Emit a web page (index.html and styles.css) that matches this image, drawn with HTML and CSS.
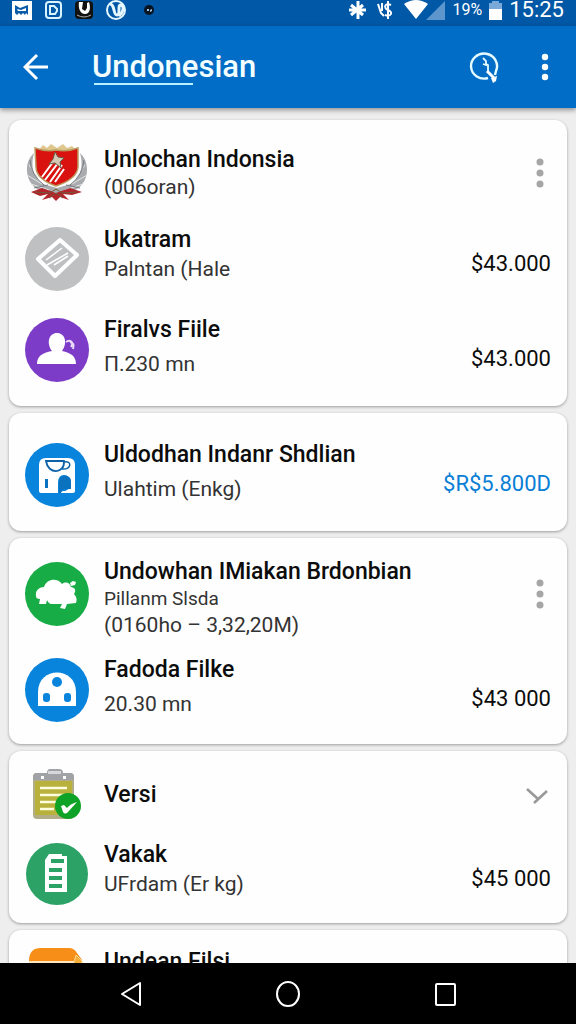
FILE: index.html
```
<!DOCTYPE html>
<html lang="id">
<head>
    <meta charset="UTF-8">
    <meta name="viewport" content="width=device-width, initial-scale=1.0">
    <title>Undonesian</title>
    <link rel="stylesheet" href="styles.css">
</head>
<body>

    <div class="status-bar">
        <div class="status-left">
            <svg width="20" height="19" viewBox="0 0 20 19"><path fill="#fff" d="M0 0h20v19H0z"/><path fill="#0a5ca8" d="M3 4l5 3 8-3v10l-2-2-1 2-2-2-2 2-2-2-2 2-2-2z"/><path fill="#fff" d="M5 8l4 1 5-2v3H6z"/></svg>
            <svg width="17" height="18" viewBox="0 0 17 18"><rect x="1" y="1" width="15" height="16" rx="3" fill="none" stroke="#d9f3ff" stroke-width="2"/><path fill="none" stroke="#d9f3ff" stroke-width="2" d="M5 5h4l3 3v2l-2 3H5z"/></svg>
            <svg width="18" height="18" viewBox="0 0 18 18"><rect width="18" height="18" rx="4" fill="#111"/><path fill="#fff" d="M4 1c-1 6 1 12 6 12s6-6 4-12l-2 1v5l-2 3-3-2 1-7z"/><path fill="none" stroke="#aaa" d="M2 14q7 4 14 0"/></svg>
            <svg width="21" height="20" viewBox="0 0 21 20"><circle cx="10" cy="10" r="9" fill="none" stroke="#e6f8ff" stroke-width="2"/><path fill="none" stroke="#e6f8ff" stroke-width="3" d="M4 4c5 0 3 11 7 11s0-11 4-10 2 8-2 11"/></svg>
            <svg class="small-dot" width="10" height="10" viewBox="0 0 10 10"><circle cx="5" cy="5" r="5" fill="#08131f"/><path fill="#9fc4e6" d="M3 4h2v2H3zM6 5l2-1v2l-2 1z"/></svg>
        </div>
        <div class="status-right">
            <svg width="17" height="20" viewBox="0 0 17 20"><path fill="none" stroke="#fff" stroke-width="3" d="M2 5l12 10M2 15L14 5M0 10h17M9 1v18"/></svg>
            <svg class="currency" width="16" height="18" viewBox="0 0 16 18"><path fill="none" stroke="#fff" stroke-width="2" d="M1 3l3 9 3 3M5 2v8M14 4c-6-3-8 3-3 5s4 7-3 5M11 0v18"/></svg>
            <svg width="42" height="20" viewBox="0 0 42 20"><path fill="#fff" d="M0 4q12-8 24 0L12 19z"/><path fill="#5d95cd" d="M41 1v19H22z"/></svg>
            <span class="percent">19%</span>
            <svg width="13" height="19" viewBox="0 0 13 19"><path fill="#78a9d8" d="M3 0h7v2h3v6H0V2h3z"/><path fill="#fff" d="M0 8h13v11H0z"/></svg>
            <span class="clock">15:25</span>
        </div>
    </div>

    <header>
        <button class="icon-button" aria-label="Back">
            <svg width="26" height="28" viewBox="0 0 26 28"><path fill="none" stroke="#fff" stroke-width="3" d="M14 2L2 14l12 12M2 14h23"/></svg>
        </button>
        <h1>Undonesian</h1>
        <button class="icon-button search" aria-label="Search">
            <svg width="30" height="32" viewBox="0 0 30 32"><path fill="none" stroke="#e6fbff" stroke-width="2.4" d="M19 27A13 12.5 0 1 1 27 20l-1 4"/><path fill="none" stroke="#e6fbff" stroke-width="1.8" d="M14 7l3 3v4l-3-1M17 13l2 1v7"/><path fill="none" stroke="#fff" stroke-width="3" d="M18 20l7 7"/><path fill="#fff" d="M22 27l6-2-1 5-3 2z"/></svg>
        </button>
        <button class="icon-button" aria-label="More options">
            <svg width="8" height="28" viewBox="0 0 8 28" fill="#fff"><circle cx="4" cy="4" r="3.2"/><circle cx="4" cy="14" r="3.2"/><circle cx="4" cy="24" r="3.2"/></svg>
        </button>
    </header>

    <main>
        <section class="card">
            <div class="row">
                <svg class="icon" viewBox="0 0 64 64">
                    <path fill="#a9abae" d="M9 12C-2 22 0 42 14 49l18 3 18-3c14-7 16-27 5-37 4 14 0 25-9 31l-14 4-14-4C9 37 5 26 9 12z"/>
                    <path fill="none" stroke="#e6e6e6" stroke-width="1" d="M4 24l9 13M2 34l15 9M6 43l18 6M60 24l-9 13M62 34l-15 9M58 43l-18 6"/>
                    <path fill="none" stroke="#777b80" stroke-width="1" d="M5 19q1 15 14 25M59 19q-1 15-14 25M9 47l14-3M55 47l-14-3"/>
                    <path fill="#dfc68d" d="M14 9l4-5 4 3 4-4 6 4 6-4 4 4 5-2 5 5z"/>
                    <path fill="#d9120f" stroke="#b99a60" stroke-width="1.5" d="M10 7q11 4 21 2 12 2 22-2v19q-1 12-22 19Q11 38 11 26z"/>
                    <path stroke="#fff" stroke-width="2" d="M17 36l11-15M20 39l13-17M25 41l12-17M30 41l9-13"/>
                    <path fill="#d3c8b4" stroke="#6b5a45" stroke-width="1" d="M30 11l3 5 6 1-4 4 1 6-6-5-6 1 4-5z"/>
                    <path fill="#fff" d="M14 38l5 2 2 4z"/>
                    <path fill="#b2242a" d="M6 51l11-4 14 5 14-5 12 4-10 3-9-1 6 6-9-3-4 4-4-4-10 3 6-6-8 2z"/>
                    <path fill="none" stroke="#6d5a3a" stroke-width="1" d="M10 51l15 1 6-4 6 4 15-1M24 57l7-5 7 5"/>
                </svg>
                <div class="text">
                    <h2>Unlochan Indonsia</h2>
                    <p>(006oran)</p>
                </div>
                <button class="more" aria-label="More">
                    <svg width="22" height="30" viewBox="0 0 22 30" fill="#a6a6a6"><circle cx="11" cy="4" r="3.5"/><circle cx="11" cy="15" r="3.5"/><circle cx="11" cy="26" r="3.5"/></svg>
                </button>
            </div>
            <div class="row medium">
                <svg class="icon" viewBox="0 0 64 64">
                    <circle cx="32" cy="32" r="32" fill="#bfc0c1"/>
                    <path fill="none" stroke="#fff" stroke-width="4" stroke-linejoin="round" d="M35 13l17 15-22 21-17-17z"/>
                    <path stroke="#fff" stroke-width="1.5" d="M21 33l16-12M22 38l21-12M29 38l14-9"/>
                </svg>
                <div class="text">
                    <h2>Ukatram</h2>
                    <p>Palntan (Hale</p>
                </div>
                <span class="price">$43.000</span>
            </div>
            <div class="row tall">
                <svg class="icon" viewBox="0 0 64 64">
                    <circle cx="32" cy="32" r="32" fill="#7d3cc8"/>
                    <path fill="#fff" d="M12 46c0-8 5-11 15-13-6-8-3-18 5-18s11 10 5 18c9 2 14 5 14 13z"/>
                    <path fill="none" stroke="#eadcf8" stroke-width="2" d="M41 24c4-3 8 0 5 5M45 24c4 1 4 3 3 7"/>
                </svg>
                <div class="text">
                    <h2>Firalvs Fiile</h2>
                    <p>Π.230 mn</p>
                </div>
                <span class="price">$43.000</span>
            </div>
        </section>

        <section class="card single">
            <div class="row tall">
                <svg class="icon" viewBox="0 0 64 64">
                    <circle cx="32" cy="32" r="32" fill="#0984dc"/>
                    <path fill="#fff" d="M14 22q0-7 7-7h22q7 0 7 7v26q0 2-2 2H34q1-2 5-2c3 0 6-2 6-8 0-5-2-8-6-8s-6 3-6 8v10H16q-2 0-2-2z"/>
                    <path fill="#fff" stroke="#0b62a9" stroke-width="1.8" d="M21 18h18c1 13-16 14-18 0z"/>
                    <path fill="none" stroke="#0b62a9" stroke-width="1.5" d="M39 19c8-2 8 8-2 7"/>
                    <path fill="#0b72bf" d="M20 36h3v9h-3zM34 38c0-7 12-7 12 0v8h-7q-2 1-3 4h-2z"/>
                </svg>
                <div class="text">
                    <h2>Uldodhan Indanr Shdlian</h2>
                    <p>Ulahtim (Enkg)</p>
                </div>
                <span class="price blue">$R$5.800D</span>
            </div>
        </section>

        <section class="card tight">
            <div class="row tall">
                <svg class="icon" viewBox="0 0 64 64">
                    <circle cx="32" cy="32" r="32" fill="#17ac45"/>
                    <path fill="#fff" d="M11 34c-1-6 4-9 8-9 3-9 14-9 18-3 4-3 8-1 9 3 5 1 5 4 3 7 3 3 3 6 2 9l-9 1-2 5-5-1 2-4H27c-3 0-4-2-5-4l-1 4h-7l1-5c-3 0-4-1-4-3z"/>
                    <path fill="#fff" d="M45 21l3-2 3 1-1 3-4 1z"/>
                </svg>
                <div class="text three-lines">
                    <h2>Undowhan IMiakan Brdonbian</h2>
                    <p class="small">Pillanm Slsda</p>
                    <p>(0160ho – 3,32,20M)</p>
                </div>
                <button class="more" aria-label="More">
                    <svg width="22" height="30" viewBox="0 0 22 30" fill="#a6a6a6"><circle cx="11" cy="4" r="3.5"/><circle cx="11" cy="15" r="3.5"/><circle cx="11" cy="26" r="3.5"/></svg>
                </button>
            </div>
            <div class="row tall">
                <svg class="icon" viewBox="0 0 64 64">
                    <circle cx="32" cy="32" r="32" fill="#0984dc"/>
                    <path fill="#fff" d="M13 48V34c0-26 38-26 38 0v14z"/>
                    <circle cx="32" cy="24" r="5" fill="#0984dc"/>
                    <rect x="18" y="35" width="7" height="9" rx="3" fill="#0984dc"/>
                    <rect x="39" y="35" width="7" height="9" rx="3" fill="#0984dc"/>
                </svg>
                <div class="text">
                    <h2>Fadoda Filke</h2>
                    <p>20.30 mn</p>
                </div>
                <span class="price">$43 000</span>
            </div>
        </section>

        <section class="card tight">
            <div class="row short">
                <svg class="icon" viewBox="0 0 64 64">
                    <rect x="8" y="10" width="41" height="46" rx="4" fill="#b1ad86"/>
                    <path fill="#b8b13c" d="M10 18h37v34H10z"/>
                    <path fill="#a0a2a5" d="M8 17v-3q0-4 4-4h10q0-4 3-4h9q4 0 4 4h7q4 0 4 4v3z"/>
                    <path fill="#d5d7d8" d="M23 8h13v3H23z"/>
                    <path fill="#fff" d="M16 13h3v3h-3zM38 13h3v3h-3z"/>
                    <path stroke="#fffde0" stroke-width="2.5" d="M15 25h27M15 32h25M15 39h18M15 46h14"/>
                    <circle cx="43" cy="43" r="13" fill="#0ea326"/>
                    <path fill="#fff" d="M36 43l3-1 3 3q3-4 10-6l-9 10q-3 3-5 0z"/>
                </svg>
                <div class="text">
                    <h2>Versi</h2>
                </div>
                <button class="more" aria-label="Expand">
                    <svg width="28" height="20" viewBox="0 0 28 20"><path fill="none" stroke="#999" stroke-width="2.6" d="M4 4l11 10M11 18L24 6"/></svg>
                </button>
            </div>
            <div class="row medium">
                <svg class="icon" viewBox="0 0 64 64">
                    <circle cx="32" cy="32" r="31" fill="#2ca266"/>
                    <path fill="#fff" d="M20 50V18l4-6h13v2h5v36z"/>
                    <path stroke="#2ca266" stroke-width="4" d="M26 19h13M24 28h13M24 36h13M24 44h13"/>
                </svg>
                <div class="text">
                    <h2>Vakak</h2>
                    <p>UFrdam (Er kg)</p>
                </div>
                <span class="price">$45 000</span>
            </div>
        </section>

        <section class="card tight">
            <div class="row top">
                <svg class="icon" viewBox="0 0 64 64">
                    <path fill="#f78e18" d="M4 23q0-13 12-13h28q5 0 8 5l5 7v34H4z"/>
                    <path fill="#ffe6bd" d="M4 23h45v4H4z"/>
                    <path fill="#f5ad35" stroke="#ffd792" d="M49 24l2-7 6 6v33h-8z"/>
                </svg>
                <div class="text">
                    <h2>Undean Filsi</h2>
                </div>
            </div>
        </section>
    </main>

    <nav>
        <button aria-label="Back"><svg width="24" height="28" viewBox="0 0 24 28"><path fill="none" stroke="#fff" stroke-width="2" stroke-linejoin="round" d="M21 3v22L3 14z"/></svg></button>
        <button aria-label="Home"><svg width="26" height="28" viewBox="0 0 26 28"><ellipse cx="13" cy="14" rx="11" ry="12" fill="none" stroke="#fff" stroke-width="2"/></svg></button>
        <button aria-label="Recent apps"><svg width="24" height="28" viewBox="0 0 24 28"><rect x="3" y="4" width="19" height="21" rx="1" fill="none" stroke="#fff" stroke-width="2"/></svg></button>
    </nav>

</body>
</html>
```
FILE: styles.css
```
* {
    margin: 0;
    padding: 0;
    box-sizing: border-box;
}

body {
    display: flex;
    flex-direction: column;
    height: 100vh;
    overflow: hidden;
    font-family: Roboto, "Liberation Sans", sans-serif;
    background-color: #eeeeef;
    color: #0c0c0c;
}

button {
    display: flex;
    align-items: center;
    justify-content: center;
    background: none;
    border: none;
    cursor: pointer;
}

svg {
    display: block;
    flex-shrink: 0;
}


.status-bar {
    display: flex;
    justify-content: space-between;
    flex-shrink: 0;
    height: 26px;
    padding: 0 12px;
    background-color: #0058a6;
    color: #fff;
}

.status-left,
.status-right {
    display: flex;
    align-items: center;
    height: 20px;
}

.status-left {
    gap: 13px;
}

.small-dot {
    margin-left: 4px;
}

.status-right {
    gap: 7px;
}

.currency {
    margin: 0 4px;
}

.percent {
    font-size: 16px;
    line-height: 20px;
}

.clock {
    font-size: 22px;
    line-height: 20px;
}


header {
    display: flex;
    align-items: center;
    flex-shrink: 0;
    height: 82px;
    padding: 0 27px 0 23px;
    background-color: #026dc6;
    box-shadow: 0 2px 5px rgba(0, 0, 0, 0.4);
    z-index: 1;
}

header h1 {
    position: relative;
    margin-left: 43px;
    font-size: 31px;
    font-weight: 500;
    line-height: 36px;
    color: #f2fdff;
}

header h1::after {
    content: "";
    position: absolute;
    left: 2px;
    bottom: 0;
    width: 60%;
    height: 2px;
    background-color: #b5f0ff;
}

.search {
    margin-left: auto;
    margin-right: 42px;
}


main {
    flex: 1;
    display: flex;
    flex-direction: column;
    gap: 7px;
    min-height: 0;
    padding: 12px 9px 0;
    overflow: hidden;
}

.card {
    flex-shrink: 0;
    padding: 10px 16px 8px;
    background-color: #fefefe;
    border-radius: 12px;
    box-shadow: 0 1px 3px rgba(0, 0, 0, 0.35);
}

.card.single {
    padding-top: 14px;
}

.card.tight {
    padding-top: 8px;
    padding-bottom: 6px;
}

.row {
    display: flex;
    align-items: center;
    gap: 15px;
    min-height: 86px;
}

.row.tall {
    min-height: 96px;
}

.row.short {
    min-height: 72px;
}

.row.top {
    align-items: flex-start;
}

.icon {
    width: 64px;
    height: 64px;
}

.text {
    flex: 1;
    white-space: nowrap;
}

.text h2 {
    font-size: 23px;
    font-weight: 500;
    line-height: 28px;
}

.text p {
    font-size: 21px;
    line-height: 26px;
    color: #333;
}

.medium .text {
    padding-bottom: 8px;
}

.medium .text p {
    line-height: 30px;
}

.tall .text p {
    line-height: 40px;
}

.tall .three-lines {
    padding-top: 8px;
}

.tall .three-lines p {
    line-height: 26px;
}

.tall .text p.small {
    font-size: 19px;
}

.top .text {
    padding-top: 10px;
}

.price {
    padding-top: 8px;
    font-size: 22px;
}

.tall .price {
    padding-top: 16px;
}

.price.blue {
    color: #0b7fd6;
}


nav {
    display: flex;
    justify-content: space-around;
    flex-shrink: 0;
    height: 61px;
    padding: 0 9%;
    background-color: #000;
}

nav button {
    width: 64px;
}
```
